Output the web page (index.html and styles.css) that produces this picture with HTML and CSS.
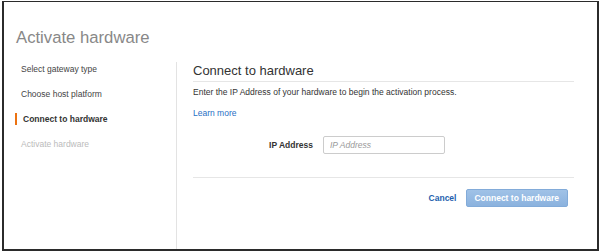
FILE: index.html
```html
<!DOCTYPE html>
<html lang="en">
<head>
    <meta charset="UTF-8">
    <meta name="viewport" content="width=device-width, initial-scale=1.0">
    <title>Activate hardware</title>
    <link rel="stylesheet" href="styles.css">
</head>
<body>
    <div class="frame">
        <h1 class="page-title">Activate hardware</h1>
        <div class="main">
            <ul class="steps">
                <li class="step">Select gateway type</li>
                <li class="step">Choose host platform</li>
                <li class="step active">Connect to hardware</li>
                <li class="step disabled">Activate hardware</li>
            </ul>
            <div class="content">
                <h2 class="section-title">Connect to hardware</h2>
                <p class="intro">Enter the IP Address of your hardware to begin the activation process.</p>
                <a class="learn-more" href="#">Learn more</a>
                <div class="field-row">
                    <label for="ip">IP Address</label>
                    <input type="text" id="ip" name="ip" placeholder="IP Address">
                </div>
                <div class="actions">
                    <a class="cancel" href="#">Cancel</a>
                    <button type="button" class="primary" disabled>Connect to hardware</button>
                </div>
            </div>
        </div>
    </div>
</body>
</html>
```

FILE: styles.css
```css
body {
    margin: 0;
    font-family: "Liberation Sans", Arial, sans-serif;
    background-color: #fff;
}

.frame {
    margin: 1px 1px 0 2px;
    height: 250px;
    box-sizing: border-box;
    border: 2px solid #2b2b2b;
    border-top-width: 1px;
    display: flex;
    flex-direction: column;
}

.page-title {
    margin: 26px 0 0 12px;
    font-size: 16.7px;
    line-height: 20px;
    font-weight: normal;
    color: #888;
}

.main {
    flex: 1;
    display: flex;
    margin-top: 14px;
}

.steps {
    list-style: none;
    margin: 0;
    padding: 1px 0 0 11px;
    width: 161px;
    border-right: 1px solid #e3e3e3;
    display: flex;
    flex-direction: column;
    gap: 13px;
}

.step {
    font-size: 8.5px;
    line-height: 12px;
    color: #444;
    padding-left: 6px;
}

.step.active {
    border-left: 2px solid #ec7211;
    font-weight: bold;
    color: #333;
}

.step.disabled {
    color: #bbb;
}

.content {
    flex: 1;
    padding: 1px 23px 0 16px;
}

.section-title {
    margin: 0;
    font-size: 13px;
    line-height: 16px;
    font-weight: normal;
    color: #333;
    padding-bottom: 2px;
    border-bottom: 1px solid #e6e6e6;
}

.intro {
    margin: 4px 0 0;
    font-size: 8.5px;
    line-height: 12px;
    color: #333;
}

.learn-more {
    display: inline-block;
    margin-top: 9px;
    font-size: 8.5px;
    line-height: 12px;
    color: #1f6fc5;
    text-decoration: none;
}

.field-row {
    display: grid;
    grid-template-columns: 120px 122px;
    column-gap: 10px;
    align-items: center;
    margin-top: 16px;
    padding-bottom: 23px;
    border-bottom: 1px solid #e6e6e6;
}

.field-row label {
    text-align: right;
    font-size: 8.5px;
    font-weight: bold;
    color: #333;
}

.field-row input {
    height: 18px;
    box-sizing: border-box;
    border: 1px solid #ccc;
    border-radius: 2px;
    padding: 0 6px;
    font-family: inherit;
    font-size: 8.5px;
}

.field-row input::placeholder {
    font-style: italic;
    color: #999;
}

.actions {
    display: flex;
    justify-content: flex-end;
    align-items: center;
    gap: 10px;
    margin-top: 11px;
    padding-right: 6px;
}

.cancel {
    font-size: 8.5px;
    font-weight: bold;
    color: #1f5fae;
    text-decoration: none;
}

.primary {
    height: 18px;
    padding: 0 8px 0 7px;
    border: 1px solid #82abd9;
    border-radius: 2px;
    background: linear-gradient(#a0c2e7, #8bb2de);
    color: #fff;
    font-family: inherit;
    font-size: 8.5px;
    font-weight: bold;
}
```
